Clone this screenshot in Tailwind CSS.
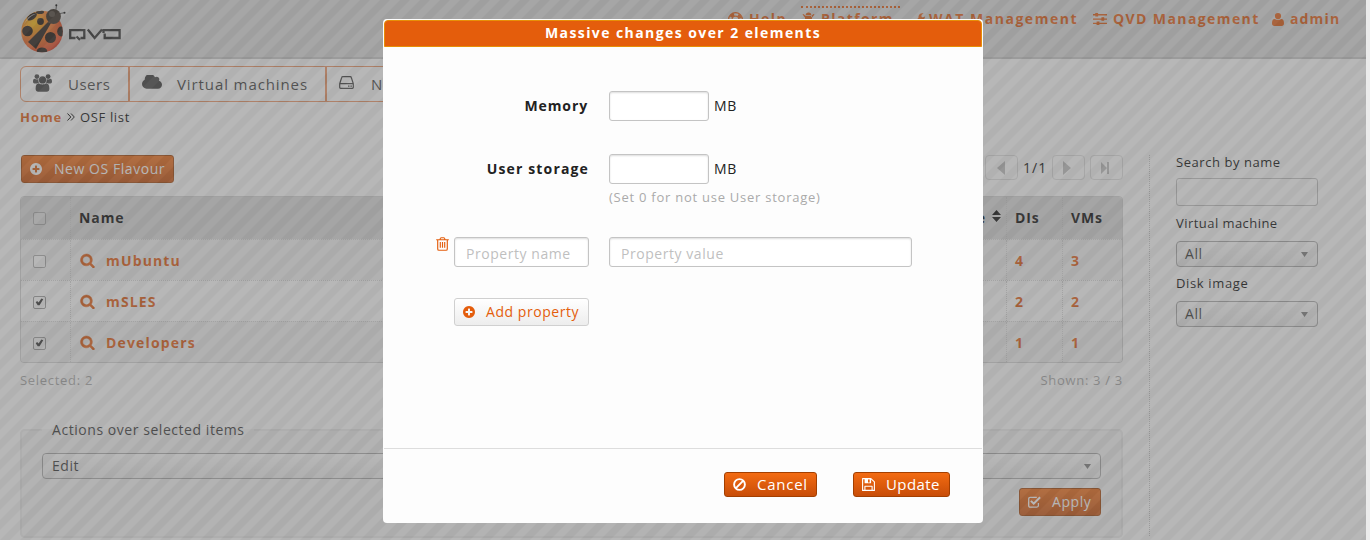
<!DOCTYPE html>
<html lang="en">
<head>
<meta charset="utf-8">
<title>QVD - OSF list</title>
<script src="https://cdn.jsdelivr.net/npm/@tailwindcss/browser@4"></script>
</head>
<body class="bg-[#ececec] font-['Open_Sans','Noto_Sans',sans-serif] text-[14px] leading-[20px] tracking-[0.55px] text-black">
<svg class="hidden">
  <symbol id="search" viewBox="0 0 1792 1792"><path stroke="currentColor" stroke-width="60" d="M1216 832q0-185-131.500-316.500t-316.500-131.500-316.500 131.500-131.500 316.500 131.500 316.500 316.500 131.500 316.500-131.500 131.500-316.500zm512 832q0 52-38 90t-90 38q-54 0-90-38l-343-342q-179 124-399 124-143 0-273.500-55.500t-225-150-150-225-55.500-273.500 55.500-273.500 150-225 225-150 273.500-55.500 273.500 55.500 225 150 150 225 55.500 273.500q0 220-124 399l343 343q37 37 37 90z"/></symbol>
  <symbol id="plus" viewBox="128 128 1536 1536"><path d="M1344 960v-128q0-26-19-45t-45-19h-256v-256q0-26-19-45t-45-19h-128q-26 0-45 19t-19 45v256h-256q-26 0-45 19t-19 45v128q0 26 19 45t45 19h256v256q0 26 19 45t45 19h128q26 0 45-19t19-45v-256h256q26 0 45-19t19-45zm320-64q0 209-103 385.500t-279.500 279.500-385.500 103-385.500-103-279.500-279.500-103-385.500 103-385.500 279.500-279.500 385.500-103 385.500 103 279.500 279.500 103 385.500z"/></symbol>
  <symbol id="cloud" viewBox="64 256 1920 1280"><path d="M1984 1152q0 159-112.500 271.500t-271.500 112.500h-1088q-185 0-316.500-131.500t-131.500-316.500q0-132 71-241.500t187-163.500q-2-28-2-43 0-212 150-362t362-150q158 0 286.500 88t187.500 230q70-62 166-62 106 0 181 75t75 181q0 75-41 138 129 30 213 134.500t84 239.500z"/></symbol>
  <symbol id="users" viewBox="0 0 19 18"><circle cx="3.900" cy="2.600" r="2.400"/><circle cx="15.100" cy="2.600" r="2.400"/><path d="M0 7.500C0 5.500.8 4.800 1.600 4.800 2.500 5.400 4.500 5.800 5.400 5.100 5.200 6.700 5.500 7.800 6 8.700 5 8.700 4.200 9 3.700 9.400H1.500C.6 9.400 0 8.800 0 7.500zM19 7.500c0-2-.8-2.700-1.600-2.700-.9.6-2.900 1-3.800.3.2 1.600-.1 2.700-.6 3.600 1 0 1.800.3 2.300.7h2.200c.9 0 1.500-.6 1.500-1.900z"/><circle cx="9.500" cy="5.900" r="3.600"/><path d="M2.600 14.800c0-3.500 1-5.600 3.200-5.600 1.800 1.600 5.600 1.600 7.400 0 2.200 0 3.200 2.100 3.200 5.600 0 1.900-1.100 2.900-2.700 2.900H5.300c-1.600 0-2.700-1-2.700-2.900z"/></symbol>
  <symbol id="hdd" viewBox="0 0 15 13"><path fill="none" stroke="currentColor" stroke-width="1.200" stroke-linejoin="round" d="M.7 7.700 2.700 1.500Q2.900.7 3.700.7h7.600q.8 0 1 .8l2 6.200v3.600q0 1-1 1H1.700q-1 0-1-1zM.7 7.700h13.600"/><path d="M9 9.400h1.500v1.300H9zM11.400 9.400h1.500v1.300h-1.500z"/></symbol>
  <symbol id="ban" viewBox="0 0 13 13"><g fill="none" stroke="currentColor" stroke-width="1.900"><circle cx="6.500" cy="6.500" r="5.400"/><path d="M10.300 2.700 2.700 10.300"/></g></symbol>
  <symbol id="save" viewBox="0 0 13 13"><path fill="none" stroke="currentColor" stroke-width="1.100" stroke-linejoin="round" d="M.6.6h8.300l3.500 3.300v8.500H.6zM2.900 12.400V8.300h7.200v4.100"/><path d="M2.600.6h6.500v4.600H2.600zM6 1.300v3.100h1.700V1.300z" fill-rule="evenodd"/></symbol>
  <symbol id="trash" viewBox="0 0 13 14"><g fill="none" stroke="currentColor" stroke-width="1.150"><path d="M.2 2.700h12.600M4 2.600Q4.300.7 5.300.7h2.400Q8.700.7 9 2.600M1.700 2.800v9.100q0 1.300 1.200 1.300h7.200q1.200 0 1.200-1.300V2.800M4.300 4.900v5.800M6.500 4.900v5.800M8.700 4.900v5.800"/></g></symbol>
  <symbol id="check" viewBox="0 0 13 12"><path fill="none" stroke="currentColor" stroke-width="1.300" d="M10.400 7v2.600q0 1.500-1.500 1.500H2.200Q.7 11.100.7 9.600V2.900q0-1.500 1.500-1.500h6.600"/><path fill="none" stroke="currentColor" stroke-width="2" d="M2.900 4.900 5.700 7.600 12.100 1.300"/></symbol>
  <symbol id="sliders" viewBox="0 0 14 12"><path d="M0 1.100h14v1.300H0zM0 5.400h14v1.300H0zM0 9.700h14V11H0z"/><path d="M2.300 0h2.800v3.500H2.300zM8.400 4.300h2.800v3.500H8.400zM3.600 8.600h2.800v3.400H3.600z"/></symbol>
  <symbol id="user" viewBox="0 0 12 13"><circle cx="6" cy="3.100" r="3.100"/><path d="M0 10.300C0 7.500.9 6 2.800 6c1.700 1.400 4.700 1.400 6.400 0 1.900 0 2.800 1.500 2.800 4.300 0 1.800-.9 2.700-2.300 2.700H2.300C.9 13 0 12.100 0 10.300z"/></symbol>
  <symbol id="ring" viewBox="0 0 15 15"><g fill="none" stroke="currentColor"><circle cx="7.500" cy="7.500" r="6.900" stroke-width="1.200"/><circle cx="7.500" cy="7.500" r="3.400" stroke-width="1.200"/><circle cx="7.500" cy="7.500" r="5.200" stroke-width="3.200" stroke-dasharray="4 4.170" stroke-dashoffset="-2.100"/></g></symbol>
  <symbol id="bug" viewBox="0 0 13 14"><path d="M3.700 3.300a2.800 2.800 0 0 1 5.600 0zM3 4h7v5q0 4-3.500 4T3 9zM0 7.200h3v1.200H0zM10 7.200h3v1.200h-3zM.5 2.600l1-.7L4 4.300 3 5.400zM12.500 2.600l-1-.7L9 4.300l1 1.100z"/></symbol>
  <symbol id="wrench" viewBox="0 0 13 13"><path d="M.6 10.500 6 5.200C5.400 2 8.300-.6 11.500.4L9.200 2.300v1.800l1.500.9 2.200-1.300c.2 3-2.200 4.700-4.900 4.100l-5.400 5c-1.500.9-3-.8-2-2.300z"/></symbol>
  <symbol id="tick" viewBox="0 0 13 13"><path d="M2 6.200 3.700 4.800l1.800 1.800L8.700 1.800l2.200 1L6.600 9.700H4.400z"/></symbol>
</svg>

<div class="relative h-[540px] w-[1366px] overflow-hidden bg-white whitespace-nowrap">
  <header class="flex h-[59px] items-start border-b-2 border-[#c6c6c6] bg-[#dbdbdb]">
    <svg class="ml-[18px] mt-[2px] h-[54px] w-[110px] shrink-0" viewBox="18 2 110 54">
      <defs>
        <radialGradient id="g" cx=".3" cy=".3" r=".8"><stop offset="0" stop-color="#f2b400"/><stop offset=".45" stop-color="#f0741c"/><stop offset="1" stop-color="#d93018"/></radialGradient>
        <clipPath id="c"><circle cx="42" cy="31.500" r="20.800"/></clipPath>
      </defs>
      <circle cx="42" cy="31.500" r="20.800" fill="url(#g)"/>
      <g clip-path="url(#c)" fill="#160c06">
        <path d="M48 22 28 42 36 49 51 23z"/><circle cx="27.500" cy="31" r="5.300"/><circle cx="40.500" cy="21.500" r="3.400"/><circle cx="50.500" cy="37.500" r="5.500"/><ellipse cx="61" cy="31.500" rx="3.800" ry="5"/><ellipse cx="42" cy="51" rx="5.300" ry="3.500"/><ellipse cx="32" cy="16.500" rx="5.500" ry="3.200" transform="rotate(-35 32 16.500)"/><ellipse cx="40" cy="12" rx="4" ry="2"/>
      </g>
      <path d="M23.500 25q5-11 13-11.500-9 4-13 11.500z" fill="#fff" opacity=".6"/>
      <circle cx="53.500" cy="16.500" r="7.400" fill="#2a1f15"/><circle cx="52" cy="14" r="3" fill="#6b6056" opacity=".6"/>
      <path d="M56 9.500 56.400 5.500M60 13.500l4.500-.8" stroke="#222" stroke-width=".8"/><circle cx="56.300" cy="5.300" r="1" /><circle cx="64.500" cy="12.800" r="1"/>
      <g fill="none" stroke="#222" stroke-width="2.300"><path d="M75.500 38H70.200V30.200H84.300V38H80.500M76.500 36.500 80 39.800M87.800 29.500 94.600 38 102 29.500M103.500 33V30.200H119.600V38H104.700V33.500"/></g>
    </svg>
    <nav class="ml-[600px] mt-[6px] flex items-start font-bold text-[#e2570a] tracking-[1.4px]">
      <div class="mt-[3px] flex w-[73px] items-center"><svg class="mr-[6px] size-[15px]" fill="currentColor"><use href="#ring"/></svg><span>Help</span></div>
      <div class="flex w-[99px] items-center border-t-2 border-dotted"><svg class="ml-px mr-[6px] h-[14px] w-[13px]" fill="currentColor"><use href="#bug"/></svg><span class="pt-px">Platform</span></div>
      <div class="ml-[13px] mt-[3px] flex w-[180px] items-center"><svg class="mr-[4px] size-[12px]" fill="currentColor"><use href="#wrench"/></svg><span class="tracking-[1.52px]">WAT Management</span></div>
      <div class="mt-[3px] flex w-[179px] items-center"><svg class="mr-[6px] h-[12px] w-[14px]" fill="currentColor"><use href="#sliders"/></svg><span>QVD Management</span></div>
      <div class="mt-[3px] flex items-center"><svg class="mr-[6px] h-[13px] w-[12px]" fill="currentColor"><use href="#user"/></svg><span class="tracking-[1.15px]">admin</span></div>
    </nav>
  </header>

  <ul class="ml-[20px] mt-[7px] flex h-[36px] w-[700px] items-center rounded-[6px] border border-[#ec9260] text-[15px] tracking-[0.9px] text-[#3a3a3a]">
    <li class="flex h-full w-[109px] items-center border-r-2 border-[#ec9260] tracking-[0.5px]"><svg class="ml-[12px] mr-[16px] mb-[2px] h-[18px] w-[19px]" fill="currentColor"><use href="#users"/></svg>Users</li>
    <li class="flex h-full w-[197px] items-center border-r-2 border-[#ec9260]"><svg class="ml-[12px] mr-[15px] mb-[5px] h-[14px] w-[20px]" fill="currentColor"><use href="#cloud"/></svg>Virtual machines</li>
    <li class="flex h-full items-center"><svg class="ml-[12px] mr-[17px] mb-[4px] h-[13px] w-[15px]" fill="currentColor"><use href="#hdd"/></svg>Nodes</li>
  </ul>
  <div class="ml-[20px] mt-[5px] flex h-[20px] items-center text-[13px]"><a class="w-[47px] font-bold tracking-[0.95px] text-[#e2570a]">Home</a><svg class="mr-[5px] h-[8px] w-[8px]" viewBox="0 0 8 8" fill="none" stroke="#000"><path d="M.5.500 3.800 4 .5 7.500M4 .5 7.300 4 4 7.500"/></svg><span class="tracking-[0.65px]">OSF list</span></div>

  <div class="mt-[28px] flex">
    <main class="ml-[20px] w-[1103px]">
      <div class="flex h-[28px] items-start">
        <button class="ml-px flex h-[28px] w-[153px] items-center rounded-[3px] border border-[#a33f00] bg-linear-to-b from-[#f36b12] to-[#c84d08] pl-[8px] text-[#fff]"><svg class="mr-[12px] size-[12px]" fill="currentColor"><use href="#plus"/></svg>New OS Flavour</button>
        <div class="ml-auto flex h-[25px] items-center">
          <div class="flex h-[25px] w-[33px] items-center rounded-[4px] border border-[#dedede] pl-[11px]"><svg class="h-[14px] w-[8px]" viewBox="0 0 8 14" fill="#bcbcbc"><path d="M8 0v14L0 7z"/></svg></div>
          <span class="ml-[5px] mt-px w-[29px] tracking-[1px]">1/1</span>
          <div class="flex h-[25px] w-[33px] items-center rounded-[4px] border border-[#dedede] pl-[10px]"><svg class="h-[14px] w-[8px]" viewBox="0 0 8 14" fill="#bcbcbc"><path d="M0 0v14L8 7z"/></svg></div>
          <div class="ml-[5px] flex h-[25px] w-[33px] items-center rounded-[4px] border border-[#dedede] pl-[10px]"><svg class="h-[12px] w-[8px]" viewBox="0 0 8 12" fill="#bcbcbc"><path d="M0 0v12L6 6zM6 0h2v12H6z"/></svg></div>
        </div>
      </div>
      <div class="mt-[13px] h-[167px] overflow-hidden rounded-[4px] border border-[#d2d2d2] font-bold tracking-[1.15px]">
        <div class="flex h-[42px] items-center bg-[#dadada] tracking-[0.9px]">
          <div class="flex h-full w-[50px] items-center border-r border-dotted border-[#cdcdcd] pl-[12px]"><i class="size-[13px] rounded-[2px] border border-[#aaa] bg-[#e0e0e0]"></i></div>
          <span class="pl-[8px]">Name</span><span class="ml-auto">e</span>
          <svg class="ml-[6px] mr-[5px] mb-[5px] h-[12px] w-[9px]" viewBox="0 0 9 12"><path d="M0 5 4.500 0 9 5zM0 7h9L4.500 12z"/></svg>
          <div class="flex h-full w-[56px] items-center border-l border-dotted border-[#cdcdcd] pl-[8px]">DIs</div>
          <div class="flex h-full w-[60px] items-center border-l border-dotted border-[#cdcdcd] pl-[8px]">VMs</div>
        </div>
        <div class="flex h-[41px] items-center border-t border-dotted border-[#d6d6d6] bg-[#f3f3f3] text-[#e2570a]">
          <div class="flex h-full w-[50px] items-center border-r border-dotted border-[#d6d6d6] pl-[12px]"><i class="mt-[2px] size-[13px] rounded-[2px] border border-[#aaa] bg-white"></i></div>
          <svg class="ml-[9px] mr-[11px] size-[15px]" fill="currentColor"><use href="#search"/></svg><span class="mt-[2px]">mUbuntu</span>
          <div class="ml-auto flex h-full w-[56px] items-center border-l border-dotted border-[#d6d6d6] pl-[8px] pt-[2px]">4</div>
          <div class="flex h-full w-[60px] items-center border-l border-dotted border-[#d6d6d6] pl-[8px] pt-[2px]">3</div>
        </div>
        <div class="flex h-[41px] items-center border-t border-dotted border-[#d6d6d6] bg-white text-[#e2570a]">
          <div class="flex h-full w-[50px] items-center border-r border-dotted border-[#d6d6d6] pl-[12px]"><svg class="mt-[2px] size-[13px] rounded-[2px] border border-[#999]"><use href="#tick" fill="#333" /></svg></div>
          <svg class="ml-[9px] mr-[11px] size-[15px]" fill="currentColor"><use href="#search"/></svg><span class="mt-[2px]">mSLES</span>
          <div class="ml-auto flex h-full w-[56px] items-center border-l border-dotted border-[#d6d6d6] pl-[8px] pt-[2px]">2</div>
          <div class="flex h-full w-[60px] items-center border-l border-dotted border-[#d6d6d6] pl-[8px] pt-[2px]">2</div>
        </div>
        <div class="flex h-[41px] items-center border-t border-dotted border-[#d6d6d6] bg-[#f3f3f3] text-[#e2570a]">
          <div class="flex h-full w-[50px] items-center border-r border-dotted border-[#d6d6d6] pl-[12px]"><svg class="mt-[2px] size-[13px] rounded-[2px] border border-[#999]"><use href="#tick" fill="#333" /></svg></div>
          <svg class="ml-[9px] mr-[11px] size-[15px]" fill="currentColor"><use href="#search"/></svg><span class="mt-[2px]">Developers</span>
          <div class="ml-auto flex h-full w-[56px] items-center border-l border-dotted border-[#d6d6d6] pl-[8px] pt-[2px]">1</div>
          <div class="flex h-full w-[60px] items-center border-l border-dotted border-[#d6d6d6] pl-[8px] pt-[2px]">1</div>
        </div>
      </div>
      <div class="mt-[7px] flex justify-between text-[13px] tracking-[0.7px] text-[#a6a6a6]"><span>Selected: 2</span><span>Shown: 3 / 3</span></div>
      <fieldset class="mt-[30px] h-[118px] rounded-[5px] border-2 border-[#ebebeb] bg-[#f6f6f6] pl-[20px] pr-[20px]">
        <legend class="h-[20px] w-[212px] pl-[10px] text-[#333]">Actions over selected items</legend>
        <div class="mt-[13px] flex h-[26px] items-center justify-between rounded-[4px] border border-[#a8a8a8] bg-linear-to-b from-white to-[#eee] pl-[9px] pr-[9px] text-[#333]"><span>Edit</span><svg class="h-[5px] w-[7px]" viewBox="0 0 7 5" fill="#777"><path d="M0 0h7L3.500 5z"/></svg></div>
        <button class="ml-auto mt-[9px] flex h-[28px] w-[82px] items-center rounded-[3px] border border-[#a33f00] bg-linear-to-b from-[#f36b12] to-[#c84d08] pl-[8px] text-[#fff]"><svg class="mr-[11px] h-[12px] w-[13px]" fill="currentColor"><use href="#check"/></svg>Apply</button>
      </fieldset>
    </main>
    <aside class="ml-[26px] h-[381px] w-[170px] border-l border-dotted border-[#c4c4c4] pl-[26px] text-[13px]">
      <div class="-mt-[3px] h-[20px]">Search by name</div>
      <div class="mt-[6px] h-[28px] w-[142px] rounded-[3px] border border-[#c0c0c0]"></div>
      <div class="mt-[7px] tracking-[0.45px]">Virtual machine</div>
      <div class="mt-[8px] flex h-[26px] w-[142px] items-center justify-between rounded-[4px] border border-[#a8a8a8] bg-linear-to-b from-white to-[#eee] pl-[8px] pr-[9px] text-[14px] text-[#333]"><span>All</span><svg class="h-[5px] w-[7px]" viewBox="0 0 7 5" fill="#777"><path d="M0 0h7L3.500 5z"/></svg></div>
      <div class="mt-[6px] tracking-[0.65px]">Disk image</div>
      <div class="mt-[8px] flex h-[26px] w-[142px] items-center justify-between rounded-[4px] border border-[#a8a8a8] bg-linear-to-b from-white to-[#eee] pl-[8px] pr-[9px] text-[14px] text-[#333]"><span>All</span><svg class="h-[5px] w-[7px]" viewBox="0 0 7 5" fill="#777"><path d="M0 0h7L3.500 5z"/></svg></div>
    </aside>
  </div>

  <!-- striped modal backdrop -->
  <svg class="absolute inset-0 h-full w-full opacity-50"><defs><pattern id="stripes" width="20" height="20" patternUnits="userSpaceOnUse"><rect width="20" height="20" fill="#727272"/><path d="M0 0H10L0 10zM20 0V10L10 20H0z" fill="#656565"/></pattern></defs><rect width="1366" height="540" fill="url(#stripes)"/></svg>

  <section class="absolute left-[383px] top-[19px] flex h-[504px] w-[600px] flex-col rounded-[4px] bg-[#fdfdfd] p-px text-[#222]">
    <h1 class="h-[27px] shrink-0 rounded-t-[4px] border border-[#e78f08] bg-[#e45d0c] text-center leading-[24px] font-bold tracking-[1.42px] text-white">Massive changes over 2 elements</h1>
    <div class="flex h-[401px] flex-col pt-[44px]">
      <div class="flex h-[30px] items-center"><label class="w-[204px] text-right font-bold tracking-[0.9px]">Memory</label><div class="ml-[21px] mr-[5px] h-[30px] w-[100px] rounded-[3px] border border-[#c4c4c4] bg-white shadow-[inset_0_1px_2px_#ddd]"></div>MB</div>
      <div class="mt-[33px] flex h-[30px] items-center"><label class="w-[205px] text-right font-bold tracking-[1.15px]">User storage</label><div class="ml-[20px] mr-[5px] h-[30px] w-[100px] rounded-[3px] border border-[#c4c4c4] bg-white shadow-[inset_0_1px_2px_#ddd]"></div>MB</div>
      <div class="ml-[225px] mt-[3px] text-[13px] tracking-[0.75px] text-[#aaa]">(Set 0 for not use User storage)</div>
      <div class="mt-[30px] flex h-[30px] items-start"><svg class="ml-[52px] mr-[5px] h-[14px] w-[13px] text-[#e45d0c]" fill="currentColor"><use href="#trash"/></svg>
        <div class="h-[30px] w-[135px] rounded-[3px] border border-[#c4c4c4] bg-white pl-[11px] pt-[6px] text-[#bfbfbf] shadow-[inset_0_1px_2px_#ddd]">Property name</div>
        <div class="ml-[20px] h-[30px] w-[303px] rounded-[3px] border border-[#c4c4c4] bg-white pl-[11px] pt-[6px] text-[#bfbfbf] shadow-[inset_0_1px_2px_#ddd]">Property value</div></div>
      <button class="ml-[70px] mt-[31px] flex h-[28px] w-[135px] items-center rounded-[3px] border border-[#d0d0d0] bg-linear-to-b from-white to-[#ededed] pl-[8px] text-[#e45d0c]"><svg class="mr-[11px] size-[12px]" fill="currentColor"><use href="#plus"/></svg>Add property</button>
    </div>
    <footer class="flex h-[74px] items-start justify-end border-t border-[#ddd] pr-[32px] pt-[23px] text-[15px] tracking-[0.75px] text-[#fff]">
      <button class="flex h-[25px] w-[93px] items-center rounded-[3px] border border-[#a33f00] bg-linear-to-b from-[#f36b12] to-[#c84d08] pl-[8px]"><svg class="mb-px mr-[11px] size-[13px]" fill="currentColor"><use href="#ban"/></svg><span class="mb-[2px]">Cancel</span></button>
      <button class="ml-[36px] flex h-[25px] w-[97px] items-center rounded-[3px] border border-[#a33f00] bg-linear-to-b from-[#f36b12] to-[#c84d08] pl-[8px] tracking-[0.4px]"><svg class="mb-px mr-[11px] size-[13px]" fill="currentColor"><use href="#save"/></svg><span class="mb-[2px]">Update</span></button>
    </footer>
  </section>
</div>
</body>
</html>
